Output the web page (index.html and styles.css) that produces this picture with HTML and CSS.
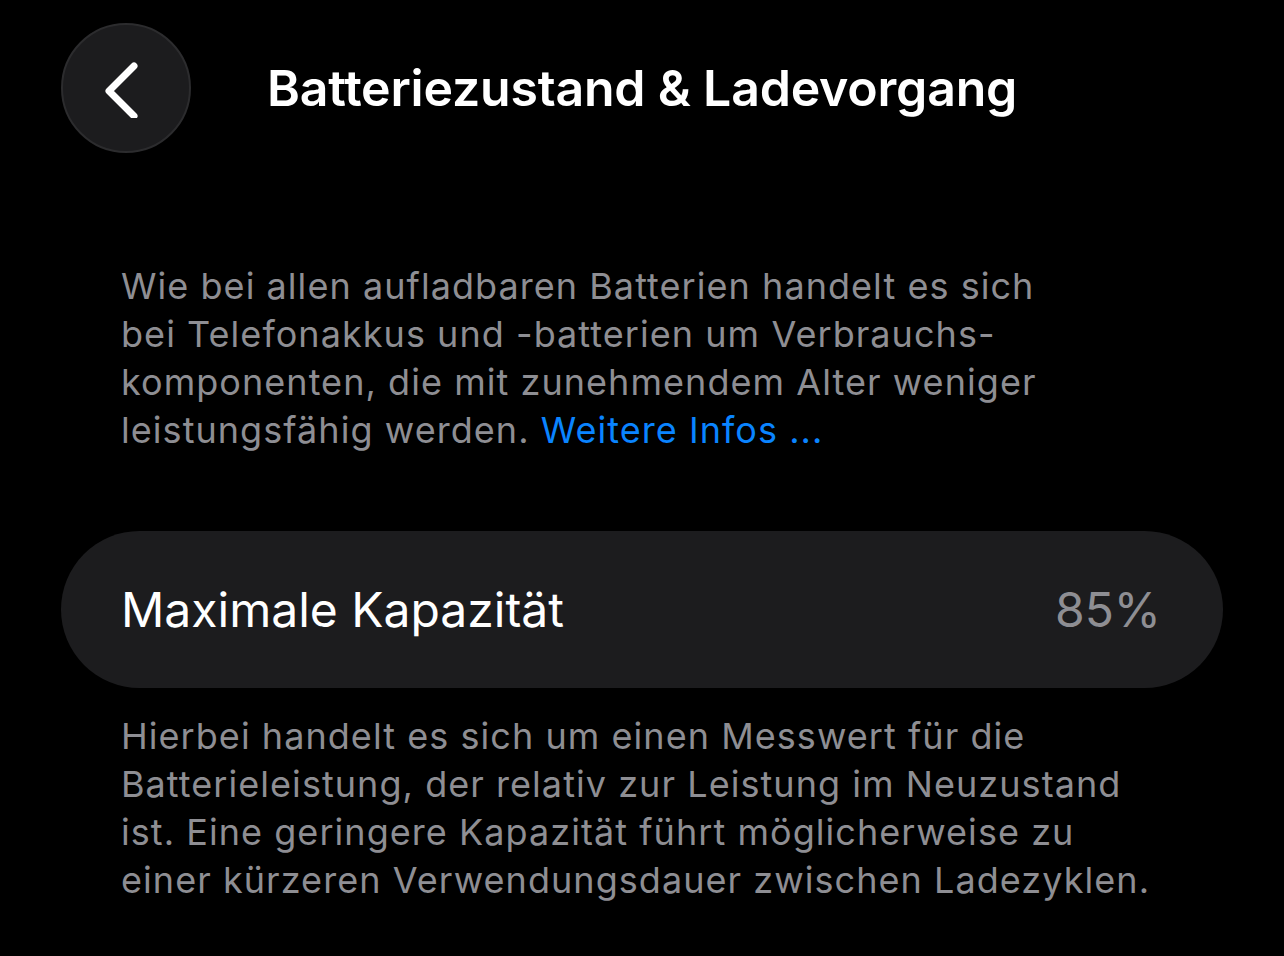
FILE: index.html
```html
<!DOCTYPE html>
<html lang="de">
<head>
  <meta charset="UTF-8" />
  <title>Batteriezustand &amp; Ladevorgang</title>
  <link rel="stylesheet" href="styles.css">
</head>
<body>
  <header class="topbar">
    <button class="back" aria-label="Zurück">
      <svg width="40" height="60" viewBox="0 0 40 60">
        <path d="M33 8 L8 33 L33 58" fill="none" stroke="#fff" stroke-width="7" stroke-linecap="round" stroke-linejoin="round" />
      </svg>
    </button>
    <h1>Batteriezustand &amp; Ladevorgang</h1>
  </header>

  <p class="note intro">
    Wie bei allen aufladbaren Batterien handelt es sich<br>
    bei Telefonakkus und -batterien um Verbrauchs-<br>
    komponenten, die mit zunehmendem Alter weniger<br>
    leistungsfähig werden. <a href="#">Weitere Infos ...</a>
  </p>

  <div class="card">
    <span class="label">Maximale Kapazität</span>
    <span class="value">85%</span>
  </div>

  <p class="note">
    Hierbei handelt es sich um einen Messwert für die<br>
    Batterieleistung, der relativ zur Leistung im Neuzustand<br>
    ist. Eine geringere Kapazität führt möglicherweise zu<br>
    einer kürzeren Verwendungsdauer zwischen Ladezyklen.
  </p>
</body>
</html>
```

FILE: styles.css
```css
body {
  margin: 0;
  background: #000;
  color: #fff;
  font-family: Inter, "Noto Sans", sans-serif;
}
.topbar {
  display: flex;
  align-items: center;
  gap: 76px;
  padding: 23px 0 0 61px;
}
.back {
  width: 130px;
  height: 130px;
  border-radius: 50%;
  background: #1c1c1e;
  border: 2px solid #2c2c2e;
  display: flex;
  align-items: center;
  justify-content: center;
  padding: 0 10px 0 0;
}
h1 {
  margin: 0;
  font-size: 50px;
  font-weight: 600;
  letter-spacing: -0.2px;
}
.note {
  margin: 0;
  padding-left: 121px;
  font-size: 36px;
  line-height: 48px;
  letter-spacing: 1.05px;
  color: #8e8e93;
}
.intro {
  margin-top: 109px;
  margin-bottom: 77px;
}
.note a {
  color: #0a84ff;
  text-decoration: none;
}
.card {
  margin: 0 61px 24px;
  height: 157px;
  border-radius: 79px;
  background: #1c1c1e;
  display: flex;
  align-items: center;
  justify-content: space-between;
  padding: 0 62px 0 60px;
}
.label {
  font-size: 48px;
}
.value {
  font-size: 48px;
  color: #8e8e93;
}
```
